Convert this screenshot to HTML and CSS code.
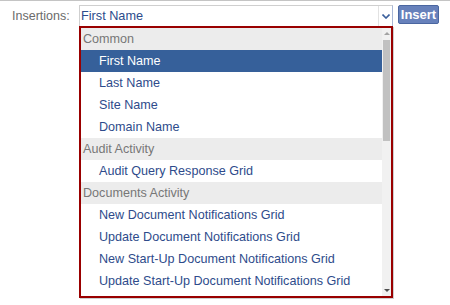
FILE: index.html
```html
<!DOCTYPE html>
<html>
<head>
<meta charset="utf-8">
<link rel="stylesheet" href="styles.css">
</head>
<body>
<div class="page">
  <div class="form-row">
    <label class="label">Insertions:</label>
    <div class="select-wrap">
      <div class="select">
        <span class="select-value">First Name</span>
        <span class="select-arrow">
          <svg width="8" height="5" viewBox="0 0 8 5"><path d="M0.5 0.5 L4 4 L7.5 0.5" fill="none" stroke="#3a5f9c" stroke-width="1.6"/></svg>
        </span>
      </div>
      <div class="dropdown">
        <ul class="list">
          <li class="group">Common</li>
          <li class="item selected">First Name</li>
          <li class="item">Last Name</li>
          <li class="item">Site Name</li>
          <li class="item">Domain Name</li>
          <li class="group">Audit Activity</li>
          <li class="item">Audit Query Response Grid</li>
          <li class="group">Documents Activity</li>
          <li class="item">New Document Notifications Grid</li>
          <li class="item">Update Document Notifications Grid</li>
          <li class="item">New Start-Up Document Notifications Grid</li>
          <li class="item">Update Start-Up Document Notifications Grid</li>
        </ul>
        <div class="scrollbar">
          <span class="sb-up"></span>
          <span class="sb-track"><span class="sb-thumb"></span></span>
          <span class="sb-down"></span>
        </div>
      </div>
    </div>
    <button class="btn">Insert</button>
  </div>
</div>
</body>
</html>
```

FILE: styles.css
```css
html, body {
  margin: 0;
  padding: 0;
  background: #ffffff;
}
body {
  font-family: "Liberation Sans", Arial, sans-serif;
  font-size: 12.6px;
  width: 450px;
  height: 305px;
  overflow: hidden;
}
.page {
  border-top: 1px solid #c4c4c4;
  height: 304px;
}
.form-row {
  display: flex;
  align-items: flex-start;
  padding-top: 4px;
  padding-left: 12px;
}
.label {
  color: #6b6b6b;
  width: 67px;
  line-height: 22px;
  font-size: 12.5px;
}
.select-wrap {
  position: relative;
  width: 314px;
}
.select {
  box-sizing: border-box;
  height: 22px;
  border: 1px solid #cfcfcf;
  border-right-color: #a9b8d6;
  display: flex;
  align-items: center;
  background: #fff;
}
.select-value {
  flex: 1;
  color: #2c4c8c;
  padding-left: 1px;
  font-size: 12.7px;
}
.select-arrow {
  width: 13px;
  height: 20px;
  border-left: 1px solid #e2e2e2;
  display: flex;
  align-items: center;
  justify-content: center;
}
.btn {
  margin-left: 5px;
  box-sizing: border-box;
  height: 19px;
  width: 41px;
  padding: 0;
  border: 1px solid #4a66a0;
  border-radius: 2px;
  background: #6781bb;
  color: #fff;
  font-family: "Liberation Sans", Arial, sans-serif;
  font-weight: bold;
  font-size: 13px;
  line-height: 17px;
}
.dropdown {
  position: absolute;
  left: 0;
  top: 21px;
  box-sizing: border-box;
  width: 314px;
  height: 272px;
  border: 2px solid #990000;
  box-shadow: 1px 1px 0 #cfcfcf;
  background: #fff;
  display: flex;
  overflow: hidden;
}
.list {
  list-style: none;
  margin: 0;
  padding: 0;
  flex: 1;
  overflow: hidden;
}
.list li {
  height: 22px;
  line-height: 23px;
  white-space: nowrap;
}
.group {
  background: #ececec;
  color: #777777;
  padding-left: 2px;
}
.item {
  color: #2e4b8b;
  padding-left: 18px;
}
.item.selected {
  background: #36609a;
  color: #ffffff;
}
.scrollbar {
  width: 9px;
  background: #f1f1f1;
  display: flex;
  flex-direction: column;
  align-items: center;
}
.sb-up, .sb-down {
  width: 0;
  height: 0;
  border-left: 3px solid transparent;
  border-right: 3px solid transparent;
  margin: 4px 0;
}
.sb-up {
  border-bottom: 3px solid #a3a3a3;
}
.sb-down {
  border-top: 3px solid #505050;
}
.sb-track {
  flex: 1;
  width: 7px;
}
.sb-thumb {
  display: block;
  width: 7px;
  height: 101px;
  margin-top: 1px;
  background: #c1c1c1;
}
```
